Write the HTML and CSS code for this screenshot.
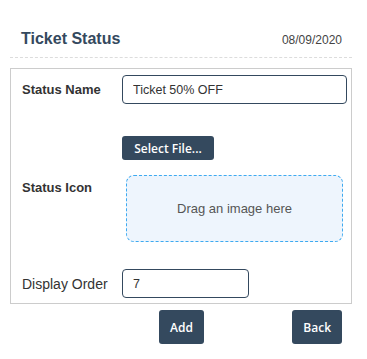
FILE: index.html
```html
<!DOCTYPE html>
<html lang="en">
<head>
    <meta charset="UTF-8">
    <meta name="viewport" content="width=device-width, initial-scale=1.0">
    <title>Ticket Status</title>
    <link rel="stylesheet" href="styles.css">
</head>
<body>
    <div class="page">
        <div class="header">
            <h2 class="title">Ticket Status</h2>
            <span class="date">08/09/2020</span>
        </div>

        <div class="formbox">
            <label class="lbl bold center" for="statusName">Status Name</label>
            <input class="inp wide" type="text" id="statusName" value="Ticket 50% OFF">

            <div></div>
            <div class="filecell">
                <button class="btn filebtn">Select File...</button>
            </div>

            <label class="lbl bold top">Status Icon</label>
            <div class="dropzone">Drag an image here</div>

            <label class="lbl big-lbl center" for="order">Display Order</label>
            <input class="inp short" type="text" id="order" value="7">
        </div>

        <div class="actions">
            <button class="btn big">Add</button>
            <button class="btn big back">Back</button>
        </div>
    </div>
</body>
</html>
```

FILE: styles.css
```css
body{
    margin: 0;
    font-family: "Liberation Sans", Arial, sans-serif;
    background: #fff;
}
.page{
    margin: 0 15px 0 10px;
}
.header{
    display: flex;
    justify-content: space-between;
    align-items: baseline;
    padding: 30px 10px 9px 11px;
    border-bottom: 1px dashed #dcdcdc;
}
.title{
    margin: 0;
    font-size: 16px;
    font-weight: bold;
    color: #34495e;
}
.date{
    font-size: 12px;
    color: #444;
}
.formbox{
    margin-top: 10px;
    border: 1px solid #ccc;
    padding: 6px 0 5px 11px;
    display: grid;
    grid-template-columns: 100px 1fr;
}
.lbl{
    font-size: 13px;
    color: #333;
}
.big-lbl{
    font-size: 14px;
}
.bold{
    font-weight: bold;
}
.center{
    align-self: center;
}
.top{
    align-self: start;
    padding-top: 20px;
}
.inp{
    box-sizing: border-box;
    height: 29px;
    border: 1px solid #34495e;
    border-radius: 4px;
    padding: 0 10px;
    font-family: "Liberation Sans", Arial, sans-serif;
    font-size: 12.5px;
    color: #333;
}
.wide{
    width: 225px;
}
.short{
    width: 127px;
}
.filecell{
    padding-top: 32px;
}
.btn{
    background: #34495e;
    color: #fff;
    border: none;
    border-radius: 3px;
    font-family: "Open Sans", sans-serif;
    font-weight: 600;
    font-size: 12px;
    cursor: pointer;
}
.filebtn{
    height: 24px;
    width: 92px;
    padding: 0;
}
.dropzone{
    box-sizing: border-box;
    margin: 15px 0 27px 4px;
    width: 217px;
    height: 67px;
    border: 1px dashed #3eaaf0;
    border-radius: 8px;
    background: #eef5fd;
    display: flex;
    justify-content: center;
    align-items: center;
    font-size: 13px;
    color: #555;
}
.actions{
    display: flex;
    padding: 6px 10px 0 149px;
}
.big{
    height: 34px;
    padding: 0 11px;
}
.back{
    margin-left: auto;
}
```
